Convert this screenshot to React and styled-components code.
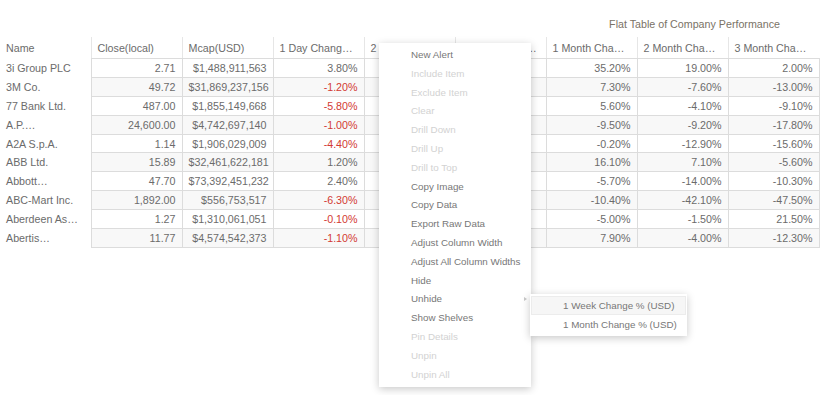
import React from 'react';
import styled, { createGlobalStyle } from 'styled-components';

const GlobalStyle = createGlobalStyle`
  html, body {
    margin: 0;
    padding: 0;
    background: #fff;
  }
  body {
    font-family: "Liberation Sans", Arial, sans-serif;
  }
`;

const columns = ['Name', 'Close(local)', 'Mcap(USD)', '1 Day Chang…', '2 Day Chang…', '1 Week Change…', '1 Month Cha…', '2 Month Cha…', '3 Month Cha…'];

const rows = [
    ['3i Group PLC', '2.71', '$1,488,911,563', '3.80%', '', '', '35.20%', '19.00%', '2.00%'],
    ['3M Co.', '49.72', '$31,869,237,156', '-1.20%', '', '', '7.30%', '-7.60%', '-13.00%'],
    ['77 Bank Ltd.', '487.00', '$1,855,149,668', '-5.80%', '', '', '5.60%', '-4.10%', '-9.10%'],
    ['A.P.…', '24,600.00', '$4,742,697,140', '-1.00%', '', '', '-9.50%', '-9.20%', '-17.80%'],
    ['A2A S.p.A.', '1.14', '$1,906,029,009', '-4.40%', '', '', '-0.20%', '-12.90%', '-15.60%'],
    ['ABB Ltd.', '15.89', '$32,461,622,181', '1.20%', '', '', '16.10%', '7.10%', '-5.60%'],
    ['Abbott…', '47.70', '$73,392,451,232', '2.40%', '', '', '-5.70%', '-14.00%', '-10.30%'],
    ['ABC-Mart Inc.', '1,892.00', '$556,753,517', '-6.30%', '', '', '-10.40%', '-42.10%', '-47.50%'],
    ['Aberdeen As…', '1.27', '$1,310,061,051', '-0.10%', '', '', '-5.00%', '-1.50%', '21.50%'],
    ['Abertis…', '11.77', '$4,574,542,373', '-1.10%', '', '', '7.90%', '-4.00%', '-12.30%'],
];

const menuItems = [
    { label: 'New Alert' },
    { label: 'Include Item', disabled: true },
    { label: 'Exclude Item', disabled: true },
    { label: 'Clear', disabled: true },
    { label: 'Drill Down', disabled: true },
    { label: 'Drill Up', disabled: true },
    { label: 'Drill to Top', disabled: true },
    { label: 'Copy Image' },
    { label: 'Copy Data' },
    { label: 'Export Raw Data' },
    { label: 'Adjust Column Width' },
    { label: 'Adjust All Column Widths' },
    { label: 'Hide' },
    { label: 'Unhide', submenu: true },
    { label: 'Show Shelves' },
    { label: 'Pin Details', disabled: true },
    { label: 'Unpin', disabled: true },
    { label: 'Unpin All', disabled: true },
];

const App = () => {
    return (
        <Page>
            <GlobalStyle />
            <Title>Flat Table of Company Performance</Title>
            <Table>
                <colgroup>
                    {columns.map(c => (
                        <col key={c} style={{ width: 91 }} />
                    ))}
                </colgroup>
                <thead>
                    <tr>
                        {columns.map((c, i) => (
                            <HeadCell key={c} $first={i === 0}>
                                {c}
                            </HeadCell>
                        ))}
                    </tr>
                </thead>
                <tbody>
                    {rows.map((r, ri) => (
                        <Row key={r[0]}>
                            <NameCell>{r[0]}</NameCell>
                            {r.slice(1).map((v, ci) => (
                                <Cell key={ci} $alt={ri % 2 === 1} $neg={ci === 2 && v.startsWith('-')}>
                                    {v}
                                </Cell>
                            ))}
                        </Row>
                    ))}
                </tbody>
            </Table>

            <Menu>
                {menuItems.map(item => (
                    <MenuItem key={item.label} $disabled={item.disabled}>
                        {item.label}
                        {item.submenu && <Arrow />}
                    </MenuItem>
                ))}
            </Menu>

            <SubMenu>
                <SubItem $active>1 Week Change % (USD)</SubItem>
                <SubItem>1 Month Change % (USD)</SubItem>
            </SubMenu>
        </Page>
    );
};

export default App;

const Page = styled.div`
    position: relative;
    width: 826px;
    height: 395px;
    overflow: hidden;
    color: #6b6b6b;
`;

const Title = styled.div`
    padding: 17px 46px 0 0;
    height: 20px;
    line-height: 14px;
    text-align: right;
    font-size: 10.7px;
    color: #7a7266;
`;

const Table = styled.table`
    width: 818px;
    table-layout: fixed;
    border-collapse: collapse;
    font-size: 10.7px;
`;

const Row = styled.tr`
    height: 18.9px;
`;

const HeadCell = styled.th`
    height: 21px;
    padding: 0 6px;
    text-align: left;
    font-weight: normal;
    color: #6b6b6b;
    white-space: nowrap;
    overflow: hidden;
    text-overflow: ellipsis;
    border-left: ${p => (p.$first ? 'none' : '1px solid #e6e6e6')};
    border-bottom: ${p => (p.$first ? 'none' : '1px solid #dcdcdc')};
`;

const NameCell = styled.td`
    padding: 0 6px;
    line-height: 16px;
    white-space: nowrap;
    overflow: hidden;
    color: #6b6b6b;
    border-right: 1px solid #dcdcdc;
`;

const Cell = styled.td`
    padding: 0 6px;
    line-height: 16px;
    text-align: right;
    white-space: nowrap;
    overflow: hidden;
    color: ${p => (p.$neg ? '#d33a33' : '#6b6b6b')};
    background: ${p => (p.$alt ? '#f8f8f8' : '#fff')};
    border: 1px solid #dcdcdc;
`;

const Menu = styled.ul`
    position: absolute;
    left: 379px;
    top: 43px;
    width: 152px;
    margin: 0;
    padding: 3px 0;
    list-style: none;
    background: #fff;
    box-shadow: 0 2px 8px rgba(0, 0, 0, 0.22);
    font-size: 9.8px;
`;

const MenuItem = styled.li`
    position: relative;
    height: 18.8px;
    line-height: 18.8px;
    padding-left: 32px;
    white-space: nowrap;
    color: ${p => (p.$disabled ? '#d2d2d2' : '#777')};
`;

const Arrow = styled.span`
    position: absolute;
    right: 4px;
    top: 7px;
    width: 0;
    height: 0;
    border-top: 2.5px solid transparent;
    border-bottom: 2.5px solid transparent;
    border-left: 3px solid #c8c8c8;
`;

const SubMenu = styled.ul`
    position: absolute;
    left: 530px;
    top: 294px;
    width: 157px;
    margin: 0;
    padding: 2px 0;
    list-style: none;
    background: #fff;
    box-shadow: 0 2px 8px rgba(0, 0, 0, 0.22);
    font-size: 9.8px;
`;

const SubItem = styled.li`
    box-sizing: border-box;
    height: 18.8px;
    line-height: 17px;
    margin: 0 1px;
    padding-left: 31px;
    white-space: nowrap;
    color: #777;
    background: ${p => (p.$active ? '#f6f6f6' : 'transparent')};
    border: 1px solid ${p => (p.$active ? '#ececec' : 'transparent')};
`;
